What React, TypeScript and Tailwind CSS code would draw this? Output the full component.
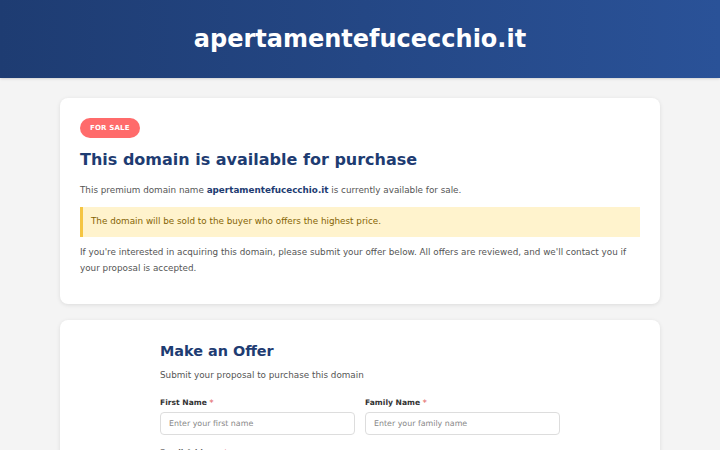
export default function App() {
  return (
    <div className="min-h-screen bg-[#f4f4f4] font-['DejaVu_Sans',sans-serif] text-[#555]">
      <header className="h-[78px] flex items-center justify-center bg-gradient-to-r from-[#1e3c72] to-[#2a5298] shadow-sm">
        <h1 className="text-[24px] font-bold text-white">apertamentefucecchio.it</h1>
      </header>

      <main className="w-[600px] mx-auto pt-5 flex flex-col gap-4">
        <section className="bg-white rounded-lg shadow-[0_1px_4px_rgba(0,0,0,0.1)] px-5 pt-5 pb-[28px]">
          <div className="flex">
            <span className="flex items-center h-5 px-[10px] rounded-full bg-[#ff6b6b] text-white text-[7px] font-bold uppercase tracking-wide">
              For Sale
            </span>
          </div>
          <h2 className="mt-[11px] text-[16px] leading-[22px] font-bold text-[#1e3c72]">
            This domain is available for purchase
          </h2>
          <p className="mt-[12px] text-[8.8px] leading-[14px]">
            This premium domain name <strong className="text-[#1e3c72]">apertamentefucecchio.it</strong> is currently available for sale.
          </p>
          <div className="mt-[10px] h-[30px] flex items-center pl-[8px] border-l-[3px] border-[#f5c542] bg-[#fff3cd] text-[#856404] text-[8.8px]">
            The domain will be sold to the buyer who offers the highest price.
          </div>
          <p className="mt-[7px] text-[8.8px] leading-[16px]">
            If you're interested in acquiring this domain, please submit your offer below. All offers are reviewed, and we'll contact you if your proposal is accepted.
          </p>
        </section>

        <section className="bg-white rounded-lg shadow-[0_1px_4px_rgba(0,0,0,0.1)] pt-5 pb-10">
          <div className="w-[400px] mx-auto">
            <h3 className="text-[14.4px] leading-[22px] font-bold text-[#1e3c72]">Make an Offer</h3>
            <p className="mt-[7px] text-[8.8px]">Submit your proposal to purchase this domain</p>
            <div className="mt-[15px] grid grid-cols-2 gap-[10px]">
              <label className="flex flex-col gap-[3px]">
                <span className="text-[7.6px] font-bold text-[#333]">
                  First Name <span className="text-[#e57373]">*</span>
                </span>
                <input
                  placeholder="Enter your first name"
                  className="h-[23px] px-2 rounded border border-[#ddd] text-[7.9px] placeholder:text-[#888] outline-none"
                />
              </label>
              <label className="flex flex-col gap-[3px]">
                <span className="text-[7.6px] font-bold text-[#333]">
                  Family Name <span className="text-[#e57373]">*</span>
                </span>
                <input
                  placeholder="Enter your family name"
                  className="h-[23px] px-2 rounded border border-[#ddd] text-[7.9px] placeholder:text-[#888] outline-none"
                />
              </label>
            </div>
            <label className="mt-[12px] flex flex-col gap-[3px]">
              <span className="text-[7.6px] font-bold text-[#333]">
                Email Address <span className="text-[#e57373]">*</span>
              </span>
              <input
                placeholder="Enter your email address"
                className="h-[23px] px-2 rounded border border-[#ddd] text-[7.9px] placeholder:text-[#888] outline-none"
              />
            </label>
          </div>
        </section>
      </main>
    </div>
  )
}
